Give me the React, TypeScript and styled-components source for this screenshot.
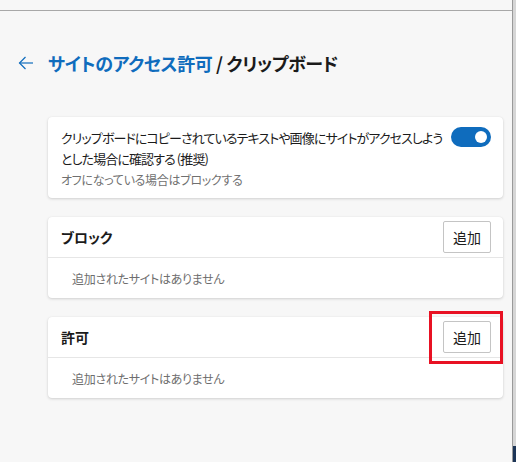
import React from 'react';
import styled, { createGlobalStyle } from 'styled-components';

const GlobalStyle = createGlobalStyle`
    html, body {
        margin: 0;
        padding: 0;
        background: #f7f7f7;
    }
    body {
        font-family: "Noto Sans CJK JP", "Noto Sans", sans-serif;
        color: #1b1b1b;
        font-feature-settings: "palt";
    }
`

const Frame = styled.div`
    display: flex;
    flex-direction: row;
    width: 516px;
    height: 462px;
    overflow: hidden;
`

const Main = styled.div`
    flex: 1;
    display: flex;
    flex-direction: column;
`

const SideEdge = styled.div`
    width: 3px;
    border-left: 1px solid #9a9a9a;
    background: linear-gradient(to bottom, #d6d6d6 0, #d6d6d6 446px, #1d3557 446px);
`

const TopStrip = styled.div`
    height: 10px;
    border-bottom: 1px solid #a8a8a8;
`

const Header = styled.div`
    display: flex;
    flex-direction: row;
    align-items: center;
    height: 24px;
    margin-top: 40px;
    padding-left: 18px;
`

const BackButton = styled.div`
    display: flex;
    align-items: center;
    width: 16px;
    height: 16px;
    margin-right: 14px;
`

const Title = styled.h1`
    margin: 0;
    font-size: 18px;
    line-height: 24px;
    font-weight: 600;
    color: #1b1b1b;
    letter-spacing: -0.4px;
`

const Crumb = styled.span`
    color: #0f6cbd;
`

const Content = styled.div`
    display: flex;
    flex-direction: column;
    gap: 19px;
    margin-top: 42px;
    padding: 0 9px 0 48px;
`

const Card = styled.div`
    background: #ffffff;
    border-radius: 4px;
    box-shadow: 0 1px 3px rgba(0, 0, 0, 0.16), 0 0 1px rgba(0, 0, 0, 0.08);
`

const ToggleRow = styled.div`
    display: flex;
    flex-direction: row;
    align-items: flex-start;
    padding: 10px 12px 10px 13px;
`

const ToggleText = styled.div`
    flex: 1;
    display: flex;
    flex-direction: column;
    padding-right: 4px;
`

const Label = styled.div`
    font-size: 13px;
    line-height: 21px;
    color: #1b1b1b;
    letter-spacing: -0.9px;
`

const SubLabel = styled.div`
    font-size: 12px;
    line-height: 16px;
    margin-top: 3px;
    color: #707070;
    letter-spacing: -0.3px;
`

const Switch = styled.div<{ on: boolean }>`
    position: relative;
    width: 40px;
    height: 20px;
    border-radius: 10px;
    background: ${p => (p.on ? '#0f6cbd' : '#ffffff')};
    flex-shrink: 0;

    &::after {
        content: '';
        position: absolute;
        top: 4px;
        left: ${p => (p.on ? '24px' : '4px')};
        width: 12px;
        height: 12px;
        border-radius: 50%;
        background: #ffffff;
    }
`

const SectionHeader = styled.div`
    display: flex;
    flex-direction: row;
    align-items: center;
    justify-content: space-between;
    height: 40px;
    padding: 0 12px 0 13px;
    border-bottom: 1px solid #e6e6e6;
`

const SectionTitle = styled.div`
    font-size: 14px;
    font-weight: 600;
    color: #1b1b1b;
`

const AddWrap = styled.div`
    position: relative;
`

const AddButton = styled.button`
    width: 48px;
    height: 32px;
    padding: 0;
    border: 1px solid #c4c4c4;
    border-radius: 2px;
    background: #ffffff;
    font-family: inherit;
    font-size: 14px;
    color: #1b1b1b;
`

const Highlight = styled.div`
    position: absolute;
    top: -10px;
    bottom: -11px;
    left: -14px;
    right: -12px;
    border: 3px solid #e81123;
    pointer-events: none;
`

const EmptyRow = styled.div`
    display: flex;
    align-items: center;
    height: 40px;
    padding-left: 24px;
    font-size: 12px;
    color: #6e6e6e;
    letter-spacing: -0.3px;
`

const BackArrow = () => (
    <svg width="16" height="16" viewBox="0 0 16 16" fill="none" stroke="#0f6cbd" strokeWidth="1.2">
        <path d="M15 8H1.5" />
        <path d="M7.5 2L1.5 8L7.5 14" />
    </svg>
)

const sections = [
    { title: 'ブロック', marked: false },
    { title: '許可', marked: true },
]

export default function App() {
    return (
        <Frame>
            <GlobalStyle />
            <Main>
                <TopStrip />
                <Header>
                    <BackButton><BackArrow /></BackButton>
                    <Title><Crumb>サイトのアクセス許可</Crumb> / クリップボード</Title>
                </Header>
                <Content>
                    <Card>
                        <ToggleRow>
                            <ToggleText>
                                <Label>クリップボードにコピーされているテキストや画像にサイトがアクセスしようとした場合に確認する (推奨)</Label>
                                <SubLabel>オフになっている場合はブロックする</SubLabel>
                            </ToggleText>
                            <Switch on={true} />
                        </ToggleRow>
                    </Card>
                    {sections.map((s) => (
                        <Card key={s.title}>
                            <SectionHeader>
                                <SectionTitle>{s.title}</SectionTitle>
                                <AddWrap>
                                    <AddButton>追加</AddButton>
                                    {s.marked && <Highlight />}
                                </AddWrap>
                            </SectionHeader>
                            <EmptyRow>追加されたサイトはありません</EmptyRow>
                        </Card>
                    ))}
                </Content>
            </Main>
            <SideEdge />
        </Frame>
    )
}
